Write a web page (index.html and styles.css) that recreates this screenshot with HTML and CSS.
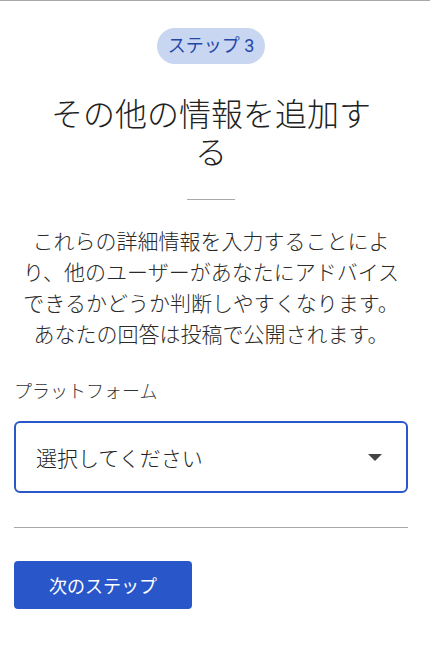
FILE: index.html
```html
<!DOCTYPE html>
<html lang="ja">
<head>
<meta charset="utf-8">
<link rel="stylesheet" href="styles.css">
</head>
<body>
<div class="topline"></div>
<main class="page">
  <div class="center">
    <span class="pill">ステップ 3</span>
  </div>
  <h1 class="title">その他の情報を追加する</h1>
  <div class="short-rule"></div>
  <p class="desc">これらの詳細情報を入力することにより、他のユーザーがあなたにアドバイスできるかどうか判断しやすくなります。あなたの回答は投稿で公開されます。</p>
  <div class="label">プラットフォーム</div>
  <div class="select">
    <span class="select-text">選択してください</span>
    <svg class="arrow" width="14" height="7" viewBox="0 0 14 7"><path d="M0 0 L14 0 L7 7 Z" fill="#444"/></svg>
  </div>
  <div class="divider"></div>
  <button class="btn">次のステップ</button>
</main>
</body>
</html>
```
FILE: styles.css
```css
* { box-sizing: border-box; }
body {
  margin: 0;
  background: #fff;
  font-family: Roboto, "Noto Sans CJK JP", sans-serif;
  color: #222;
}
.topline {
  width: 430px;
  border-top: 1px solid #aaa;
}
.page {
  width: 422px;
  padding: 0 14px;
}
.center {
  display: flex;
  justify-content: center;
  margin-top: 27px;
}
.pill {
  display: inline-block;
  height: 36px;
  line-height: 36px;
  padding: 0 11px;
  border-radius: 18px;
  background: #c9d6f2;
  color: #2447a6;
  font-size: 18px;
}
.title {
  margin: 32px 30px 0;
  font-size: 32px;
  line-height: 38px;
  font-weight: 300;
  text-align: center;
  color: #222;
}
.short-rule {
  width: 48px;
  margin: 27px auto 0;
  border-top: 1px solid #aaa;
}
.desc {
  margin: 27px 5px 0;
  font-size: 21px;
  line-height: 31px;
  font-weight: 300;
  text-align: center;
  color: #2a2a2a;
}
.label {
  margin-top: 29px;
  font-size: 18px;
  line-height: 24px;
  font-weight: 300;
  color: #333;
}
.select {
  margin-top: 17px;
  height: 72px;
  border: 2px solid #2a57c9;
  border-radius: 6px;
  display: flex;
  align-items: center;
  justify-content: space-between;
  padding: 0 24px 0 20px;
}
.select-text {
  font-size: 21px;
  font-weight: 300;
  color: #222;
}
.arrow { display: block; }
.divider {
  margin-top: 34px;
  border-top: 1px solid #aaa;
}
.btn {
  margin-top: 33px;
  width: 178px;
  height: 48px;
  border: none;
  border-radius: 4px;
  background: #2957c9;
  color: #fff;
  font-family: Roboto, "Noto Sans CJK JP", sans-serif;
  font-size: 18px;
}
```
